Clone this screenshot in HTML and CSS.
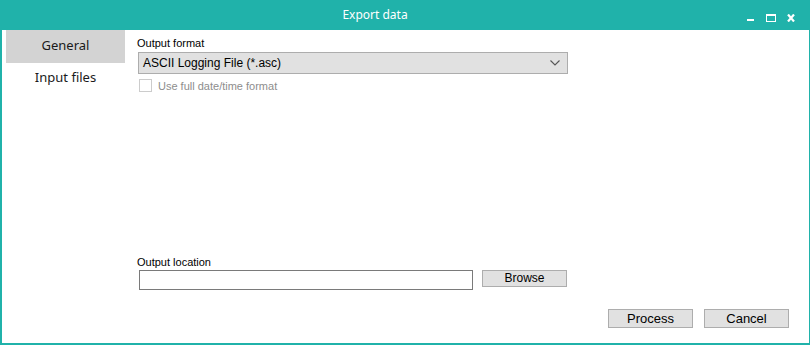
FILE: index.html
```html
<!DOCTYPE html>
<html lang="en">
<head>
    <meta charset="UTF-8">
    <title>Export data</title>
    <link rel="stylesheet" href="styles.css">
</head>
<body>
    <div class="window">
        <div class="title-bar">
            <div class="title-text">Export data</div>
            <div class="window-controls">
                <svg class="ctrl" width="8" height="8" viewBox="0 0 8 8"><rect x="0" y="5" width="7" height="2" fill="#fff"/></svg>
                <svg class="ctrl" width="10" height="8" viewBox="0 0 10 8"><rect x="0.5" y="0.5" width="9" height="7" fill="none" stroke="#fff"/><rect x="0" y="0" width="10" height="2" fill="#fff"/></svg>
                <svg class="ctrl" width="8" height="8" viewBox="0 0 8 8"><path d="M1 0.5 L7 7.5 M7 0.5 L1 7.5" stroke="#fff" stroke-width="2.2"/></svg>
            </div>
        </div>

        <div class="window-body">
            <div class="sidebar">
                <div class="tab active">General</div>
                <div class="tab">Input files</div>
            </div>

            <div class="content">
                <div class="field-label">Output format</div>
                <div class="combo">
                    <span>ASCII Logging File (*.asc)</span>
                    <svg width="10" height="6" viewBox="0 0 10 6"><path d="M0.5 0.5 L5 5 L9.5 0.5" fill="none" stroke="#555" stroke-width="1.1"/></svg>
                </div>
                <label class="check disabled">
                    <span class="check-box"></span>
                    Use full date/time format
                </label>

                <div class="spacer"></div>

                <div class="field-label">Output location</div>
                <div class="location-row">
                    <div class="text-input"></div>
                    <button class="btn btn-browse">Browse</button>
                </div>

                <div class="footer">
                    <button class="btn btn-action">Process</button>
                    <button class="btn btn-action">Cancel</button>
                </div>
            </div>
        </div>
    </div>
</body>
</html>
```

FILE: styles.css
```css
* {
    margin: 0;
    padding: 0;
    box-sizing: border-box;
}

body {
    font-family: "Liberation Sans", Arial, sans-serif;
    background: #fff;
    color: #000;
}

.window {
    width: 810px;
    height: 345px;
    display: flex;
    flex-direction: column;
    border: 1px solid #20b2aa;
    border-left-width: 2px;
    border-bottom-width: 2px;
    border-top: none;
    background: #fff;
}

.title-bar {
    height: 30px;
    background: #20b2aa;
    color: #fff;
    position: relative;
    display: flex;
    align-items: center;
    justify-content: center;
    margin: 0 -1px 0 -2px;
    padding-right: 60px;
    flex-shrink: 0;
}

.title-text {
    font-family: "Noto Sans", sans-serif;
    font-size: 12px;
    margin-top: -2px;
}

.window-controls {
    position: absolute;
    right: 15px;
    top: 14px;
    display: flex;
    gap: 11px;
    align-items: flex-start;
}

.window-body {
    flex: 1;
    display: flex;
}

.sidebar {
    width: 135px;
    padding-left: 4px;
    flex-shrink: 0;
}

.tab {
    width: 119px;
    height: 33px;
    display: flex;
    align-items: center;
    justify-content: center;
    padding-bottom: 3px;
    font-family: "Noto Sans", sans-serif;
    font-size: 13px;
    color: #1a1a1a;
}

.tab + .tab {
    height: 30px;
}

.tab.active {
    background: #d3d3d3;
}

.content {
    flex: 1;
    display: flex;
    flex-direction: column;
    padding-top: 6px;
    padding-bottom: 15px;
}

.field-label {
    font-size: 11px;
    line-height: 14px;
    height: 15px;
}

.combo {
    width: 430px;
    height: 22px;
    margin-left: 1px;
    margin-top: 1px;
    background: #e1e1e1;
    border: 1px solid #adadad;
    display: flex;
    align-items: center;
    justify-content: space-between;
    padding: 0 7px 0 4px;
    font-size: 12px;
}

.check {
    display: flex;
    align-items: center;
    gap: 6px;
    margin-top: 5px;
    margin-left: 2px;
    font-size: 11px;
    height: 13px;
}

.check.disabled {
    color: #8d8d8d;
}

.check-box {
    width: 13px;
    height: 13px;
    border: 1px solid #cccccc;
    background: #fff;
}

.spacer {
    flex: 1;
}

.location-row {
    display: flex;
    align-items: flex-start;
    gap: 9px;
    margin-left: 2px;
}

.text-input {
    width: 334px;
    height: 20px;
    border: 1px solid #7a7a7a;
    background: #fff;
}

.btn {
    font-family: "Liberation Sans", Arial, sans-serif;
    background: #e1e1e1;
    border: 1px solid #adadad;
    color: #000;
}

.btn-browse {
    width: 85px;
    height: 17px;
    font-size: 12px;
    line-height: 15px;
}

.footer {
    display: flex;
    justify-content: flex-end;
    gap: 11px;
    margin-top: 19px;
    padding-right: 20px;
}

.btn-action {
    width: 85px;
    height: 19px;
    font-size: 13px;
    line-height: 17px;
}
```
